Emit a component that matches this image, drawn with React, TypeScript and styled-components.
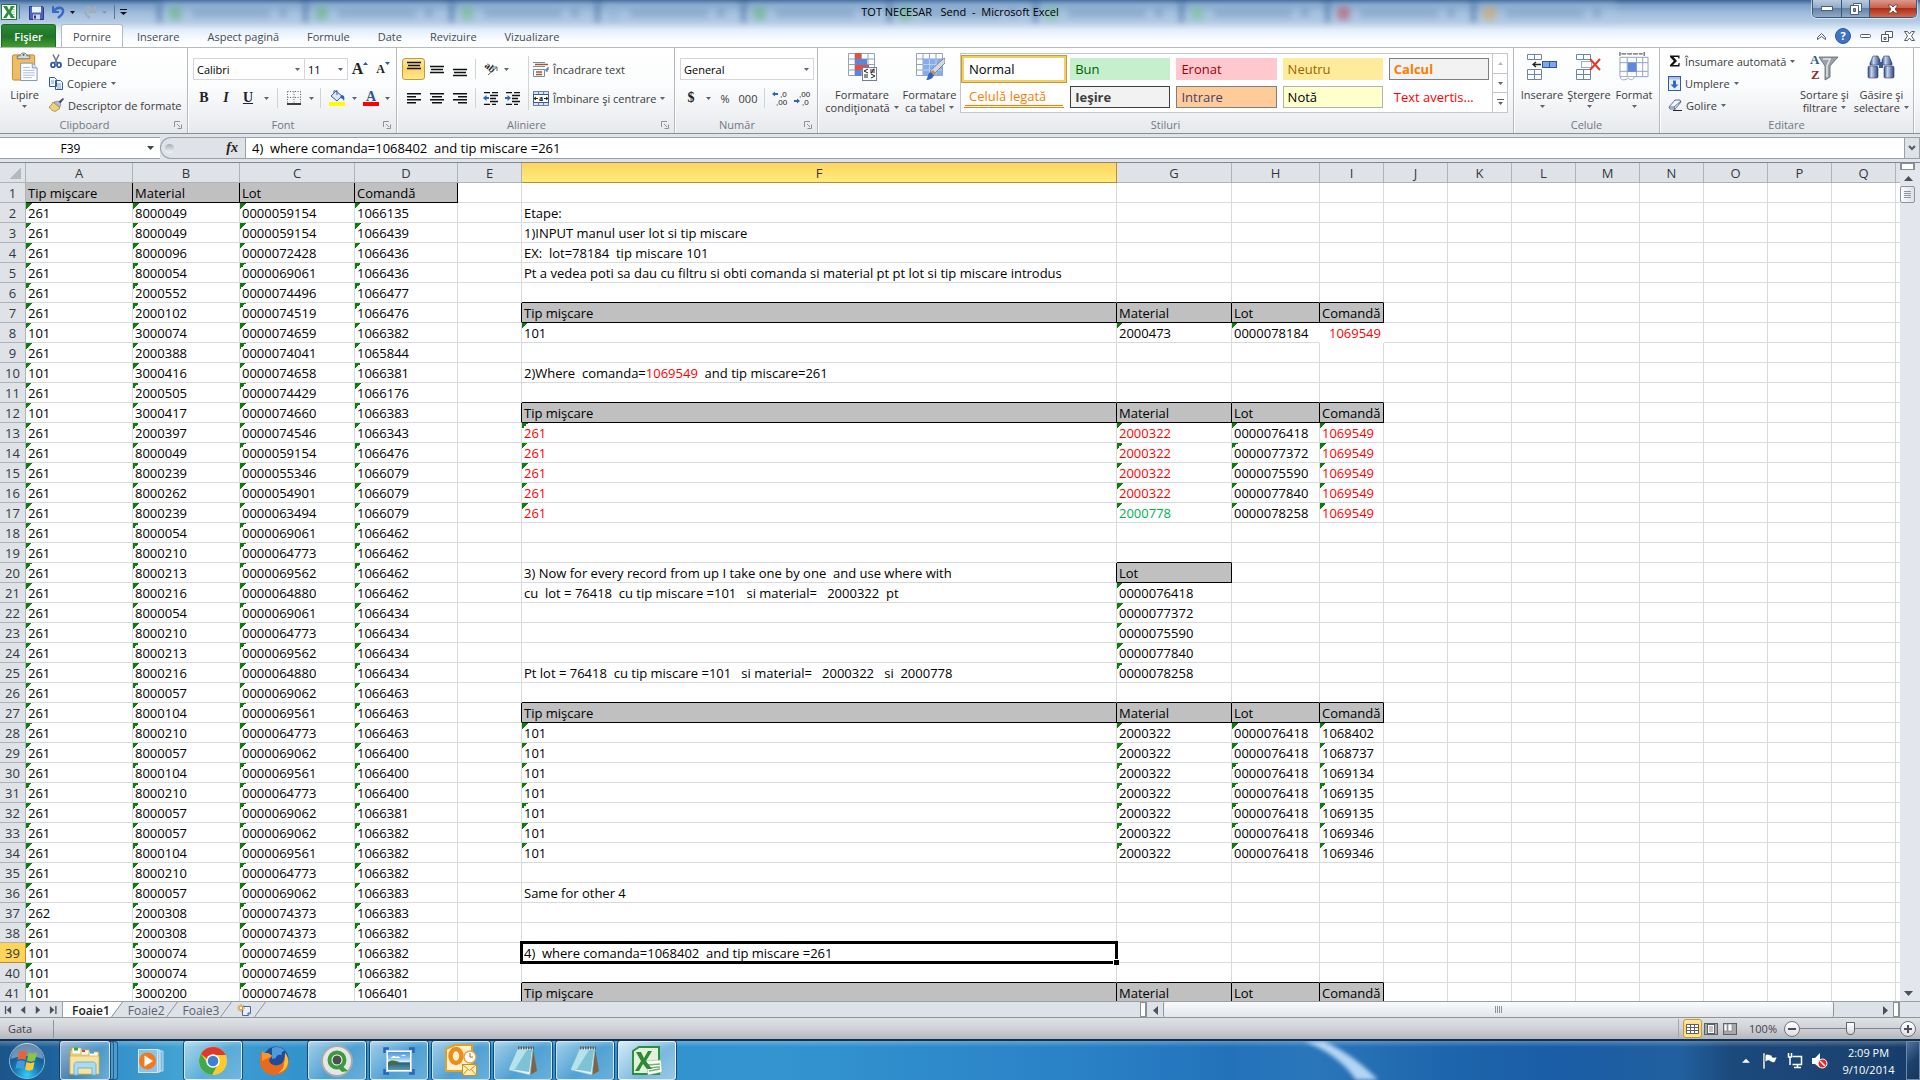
import React from "react";
import styled, { createGlobalStyle, css } from "styled-components";

const ui = `"Open Sans", "Noto Sans", sans-serif`;

const Global = createGlobalStyle`
  *, *::before, *::after { box-sizing: border-box; }
  body { margin: 0; background: #dfe3e8; font-family: ${ui}; font-size: 11px; color: #3b3b3b; }
  button, input, select { font: inherit; color: inherit; margin: 0; padding: 0; border: 0; background: none; border-radius: 0; outline: 0; }
  svg { display: block; flex: none; }
`;

const Window = styled.div`
  display: flex;
  flex-direction: column;
  height: 100vh;
  overflow: hidden;
`;

/* ---------- title bar ---------- */

const Glass = styled.header`
  position: relative;
  height: 48px;
  flex: none;
  overflow: hidden;
  border-bottom: 1px solid #b6babf;
  background: linear-gradient(#3c6596 0, #7ea2c9 5px, #a3bfdd 14px, #b4cce4 22px, #e3eefa 30px, #fafcff 40px, #ffffff 48px);
`;

const Backdrop = styled.div`
  position: absolute;
  inset: 0;
  display: flex;
  padding-left: 158px;
  filter: blur(3px);
`;

const GhostTab = styled.div`
  flex: 0 0 146px;
  height: 22px;
  display: flex;
  align-items: center;
  gap: 10px;
  padding: 4px 18px 0 8px;
  border-left: 3px solid #41699a;
  border-radius: 8px 8px 0 0;
  background: rgba(176, 202, 230, 0.25);
`;

const GhostIcon = styled.span<{ $c: string }>`
  width: 13px;
  height: 13px;
  border-radius: 4px;
  background: ${(p) => p.$c};
  opacity: 0.5;
`;

const GhostLine = styled.span`
  flex: 1;
  height: 7px;
  background: #587ba3;
  opacity: 0.35;
`;

const GhostClose = styled.span`
  width: 6px;
  height: 6px;
  background: #4a6c95;
  opacity: 0.5;
`;

const TitleRow = styled.div`
  position: relative;
  display: grid;
  grid-template-columns: 1fr auto 1fr;
  height: 24px;
`;

const Quick = styled.div`
  display: flex;
  align-items: center;
`;

const Slot = styled.button<{ $w?: number }>`
  width: ${(p) => p.$w ?? 22}px;
  height: 22px;
  flex: none;
  display: flex;
  align-items: center;
  justify-content: center;
`;

const QuickSep = styled.span`
  width: 1px;
  height: 14px;
  background: #5f7590;
`;

const Title = styled.h1`
  margin: 0;
  font-size: 11px;
  font-weight: 400;
  line-height: 24px;
  color: #000;
  white-space: pre;
`;

const Caption = styled.div`
  justify-self: end;
  display: flex;
  height: 18px;
  margin-right: 3px;
  border: 1px solid #3c5878;
  border-top: 0;
  border-radius: 0 0 5px 5px;
  overflow: hidden;
  box-shadow: 0 0 0 1px rgba(255, 255, 255, 0.5);
`;

const CapBtn = styled.button<{ $close?: boolean }>`
  width: ${(p) => (p.$close ? 47 : 28)}px;
  display: flex;
  align-items: center;
  justify-content: center;
  background: ${(p) =>
    p.$close
      ? "linear-gradient(#d99b8d, #c9614d 45%, #b02c17 50%, #cf6a50)"
      : "linear-gradient(#b9cbdf, #92abc7 45%, #6482a5 50%, #8facca)"};
  & + & { border-left: 1px solid #3c5878; }
`;

/* ---------- ribbon tabs ---------- */

const TabRow = styled.nav`
  position: relative;
  display: flex;
  height: 24px;
  padding-left: 1px;
`;

const FileTab = styled.button`
  width: 55px;
  margin-right: 5px;
  border: 1px solid #1d6b25;
  border-bottom: 0;
  border-radius: 3px 3px 0 0;
  background: linear-gradient(#2c8b34, #1f7528 50%, #42a32c);
  color: #fff;
  font-weight: 600;
`;

const Tab = styled.button<{ $active?: boolean }>`
  padding: 0 14px;
  color: #444a52;
  ${(p) =>
    p.$active &&
    css`
      padding: 0 11px;
      border: 1px solid #b6babf;
      border-bottom: 0;
      border-radius: 3px 3px 0 0;
      background: #fff;
    `}
`;

const DocControls = styled.div`
  display: flex;
  align-items: center;
  margin-left: auto;
`;

/* ---------- ribbon ---------- */

const Ribbon = styled.section`
  display: flex;
  height: 86px;
  flex: none;
  border-bottom: 1px solid #8a8f96;
  background: linear-gradient(#ffffff, #fbfcfd 45%, #eceef1 85%, #e6e9ec);
`;

const Group = styled.div<{ $w?: number }>`
  display: flex;
  flex-direction: column;
  flex: ${(p) => (p.$w ? `0 0 ${p.$w}px` : "1 1 0")};
  min-width: 0;
  border-right: 1px solid #b5b9be;
  box-shadow: 1px 0 0 #fff;
`;

const GroupBody = styled.div<{ $pad?: number }>`
  display: flex;
  height: 68px;
  padding: 2px 0 0 ${(p) => p.$pad ?? 0}px;
`;

const GroupLabel = styled.div`
  display: flex;
  align-items: center;
  height: 17px;
  color: #727784;
  span { flex: 1; text-align: center; }
`;

const LaunchBtn = styled.button`
  width: 18px;
  height: 16px;
  display: flex;
  align-items: center;
  justify-content: center;
`;

const Big = styled.button<{ $w: number }>`
  width: ${(p) => p.$w}px;
  flex: none;
  display: flex;
  flex-direction: column;
  align-items: center;
  padding-top: 2px;
  line-height: 13px;
  white-space: nowrap;
  & > svg { height: 30px; }
  & > svg + span { margin-top: 6px; }
`;

const BigLine = styled.span`
  display: flex;
  align-items: center;
  gap: 4px;
`;

const CaretBox = styled.span`
  display: flex;
  align-items: center;
  height: 11px;
`;

const Stack = styled.div<{ $rows?: boolean }>`
  display: flex;
  flex-direction: column;
  ${(p) => p.$rows && css`gap: 7px; padding-top: 8px;`}
`;

const Row = styled.div`
  display: flex;
  align-items: center;
  height: 22px;
`;

const Small = styled.button`
  display: flex;
  align-items: center;
  gap: 4px;
  height: 22px;
  white-space: nowrap;
`;

const Tool = styled(Slot)<{ $on?: boolean }>`
  ${(p) =>
    p.$on &&
    css`
      border: 1px solid #c29b3d;
      border-radius: 3px;
      background: linear-gradient(#fce7a2, #fdd468 50%, #fee88d);
    `}
`;

const Sep = styled.span<{ $h?: number }>`
  width: 1px;
  height: ${(p) => p.$h ?? 20}px;
  margin: 0 4px;
  flex: none;
  background: #d0d3d7;
`;

const TallSep = styled(Sep)`
  align-self: center;
`;

const Pick = styled.label<{ $w: number }>`
  display: flex;
  align-items: center;
  width: ${(p) => p.$w}px;
  height: 22px;
  padding-right: 4px;
  border: 1px solid #d3d6da;
  background: #fff;
  color: #000;
  & + & { border-left: 0; }
  select { flex: 1; min-width: 0; padding-left: 3px; appearance: none; height: 20px; }
`;

const Glyph = styled.span<{ $size?: number; $italic?: boolean; $line?: boolean }>`
  font-family: "Liberation Serif", serif;
  font-weight: 700;
  font-size: ${(p) => p.$size ?? 14}px;
  font-style: ${(p) => (p.$italic ? "italic" : "normal")};
  text-decoration: ${(p) => (p.$line ? "underline" : "none")};
  color: #222;
`;

const Gallery = styled.div`
  display: flex;
  flex: 1;
  height: 60px;
  margin: 3px 5px 0 0;
  border: 1px solid #c3c7cc;
  background: #fff;
`;

const Swatches = styled.div`
  display: grid;
  flex: 1;
  grid-template-columns: repeat(5, minmax(0, 1fr));
  grid-auto-rows: 22px;
  gap: 6px;
  padding: 4px 3px 0 3px;
`;

const Swatch = styled.button<{ $bg?: string; $fg: string; $edge?: string; $bold?: boolean; $sel?: boolean; $linked?: boolean }>`
  padding-left: 4px;
  text-align: left;
  font-size: 13px;
  line-height: 18px;
  white-space: nowrap;
  font-weight: ${(p) => (p.$bold ? 700 : 400)};
  background: ${(p) => p.$bg ?? "#fff"};
  color: ${(p) => p.$fg};
  border: 1px solid ${(p) => p.$edge ?? "transparent"};
  ${(p) => p.$sel && css`border-color: #fff; outline: 2px solid #f3cf60; box-shadow: 0 0 0 3px #c79a35;`}
  ${(p) => p.$linked && css`border-bottom: 3px double #ff8001;`}
`;

const GalleryNav = styled.div`
  display: flex;
  flex-direction: column;
  width: 15px;
  border-left: 1px solid #c3c7cc;
  button { flex: 1; display: flex; align-items: center; justify-content: center; }
  button + button { border-top: 1px solid #c3c7cc; }
`;

/* ---------- formula bar ---------- */

const FormulaBar = styled.div`
  display: flex;
  flex: none;
  height: 28px;
  padding: 3px 0;
  background: #dfe4ea;
`;

const NameBox = styled.div`
  display: flex;
  align-items: center;
  width: 160px;
  border: 1px solid #9ba0a7;
  border-width: 1px 0;
  background: #fff;
  color: #000;
  input { width: 141px; text-align: center; font-size: 12px; }
`;

const FxArea = styled.div`
  display: flex;
  align-items: center;
  justify-content: space-between;
  width: 85px;
  padding: 0 7px 0 4px;
  border: 1px solid #9ba0a7;
  border-right: 0;
  border-radius: 11px 0 0 11px;
  background: #dfe3e8;
`;

const Knob = styled.span`
  width: 9px;
  height: 9px;
  border-radius: 50%;
  background: linear-gradient(#a9adb3, #f4f5f6);
`;

const FormulaInput = styled.div`
  flex: 1;
  border: 1px solid #9ba0a7;
  border-right: 0;
  background: #fff;
  input { width: 100%; height: 20px; padding-left: 6px; font-size: 13px; color: #000; white-space: pre; }
`;

const Expand = styled.button`
  width: 16px;
  display: flex;
  align-items: center;
  justify-content: center;
  border: 1px solid #9ba0a7;
  background: #dfe3e8;
`;

/* ---------- worksheet ---------- */

const Work = styled.main`
  display: flex;
  flex: 1 1 0;
  min-height: 0;
  border-top: 1px solid #84888e;
  background: #fff;
`;

const Pane = styled.div`
  flex: 1;
  min-width: 0;
  overflow: hidden;
`;

const Sheet = styled.table`
  table-layout: fixed;
  width: max-content;
  border-collapse: separate;
  border-spacing: 0;
  font-size: 13px;
  line-height: 18px;
  color: #000;
`;

const head = css<{ $on?: boolean }>`
  height: 20px;
  padding: 0;
  font-weight: 400;
  color: #33373d;
  text-align: center;
  border: 0 solid #aeb3ba;
  border-width: 0 1px 1px 0;
  background: #dfe3e8;
`;

const ColHead = styled.th<{ $on?: boolean }>`
  ${head}
  ${(p) => p.$on && css`border-color: #c18b2c; background: linear-gradient(#ffd461, #ffec7b);`}
`;

const RowHead = styled.th<{ $on?: boolean }>`
  ${head}
  ${(p) => p.$on && css`border-color: #c18b2c; background: #ffd559;`}
`;

const Corner = styled.th`
  ${head}
  background: linear-gradient(135deg, transparent 50%, #b4b9bf 50%) 10px 5px / 11px 11px no-repeat, #dfe3e8;
`;

const Cell = styled.td<{ $fill?: boolean; $flag?: boolean; $r: string; $b: string; $c?: string; $end?: boolean }>`
  position: relative;
  height: 20px;
  padding: 0 2px;
  white-space: pre;
  text-align: ${(p) => (p.$end ? "right" : "left")};
  color: ${(p) => p.$c ?? "#000"};
  border: 0 solid;
  border-right: 1px solid ${(p) => p.$r};
  border-bottom: 1px solid ${(p) => p.$b};
  background: ${(p) =>
    p.$fill ? "#c0c0c0" : p.$flag ? "linear-gradient(135deg, #0a7d0a 50%, transparent 50%) 0 0 / 6px 6px no-repeat" : "none"};
`;

const Red = styled.span`
  color: #f00;
`;

const Selection = styled.span`
  position: absolute;
  inset: -2px;
  border: 3px solid #000;
  pointer-events: none;
  z-index: 1;
  &::after {
    content: "";
    position: absolute;
    right: -4px;
    bottom: -4px;
    width: 6px;
    height: 6px;
    background: #000;
    border: 1px solid #fff;
    border-width: 1px 0 0 1px;
  }
`;

const VScroll = styled.div`
  display: flex;
  flex-direction: column;
  width: 20px;
  flex: none;
  padding-right: 5px;
  background: #e3e7ed;
`;

const Splitter = styled.span`
  height: 7px;
  border: 2px solid #8b9097;
  border-width: 1px 2px;
  background: #fff;
`;

const ScrollBtn = styled.button`
  width: 16px;
  height: 16px;
  display: flex;
  flex: none;
  align-items: center;
  justify-content: center;
`;

const VThumb = styled.span`
  height: 17px;
  display: flex;
  align-items: center;
  justify-content: center;
  border: 1px solid #8f949b;
  border-radius: 2px;
  background: linear-gradient(90deg, #fbfcfd, #dde1e6);
`;

const VTrack = styled.div`
  flex: 1;
`;

/* ---------- sheet tabs ---------- */

const SheetBar = styled.div`
  display: flex;
  flex: none;
  height: 17px;
  padding-right: 20px;
  border-top: 1px solid #9ba0a7;
  border-bottom: 1px solid #8f949b;
  background: #dde1e8;
`;

const SheetNav = styled.div`
  display: flex;
  width: 63px;
  border-right: 1px solid #9ba0a7;
  button { width: 15px; display: flex; align-items: center; justify-content: center; }
`;

const SheetTab = styled.button<{ $active?: boolean }>`
  padding: 2px 0 0 ${(p) => (p.$active ? 9 : 5)}px;
  font-size: 12px;
  line-height: 14px;
  color: ${(p) => (p.$active ? "#222" : "#5b6068")};
  font-weight: ${(p) => (p.$active ? 600 : 400)};
  background: ${(p) => (p.$active ? "#fff" : "none")};
`;

const HScroll = styled.div`
  display: flex;
  width: 40%;
  margin-left: auto;
`;

const HSplit = styled.span`
  width: 7px;
  border: 1px solid #8b9097;
  border-right-width: 2px;
  background: #fff;
`;

const HTrack = styled.div`
  display: flex;
  flex: 1;
  padding-right: 43px;
`;

const HThumb = styled.span`
  flex: 1;
  display: flex;
  align-items: center;
  justify-content: center;
  border: 1px solid #8f949b;
  border-width: 0 1px;
  border-radius: 2px;
  background: linear-gradient(#f9fafc, #e2e6eb);
`;

/* ---------- status bar ---------- */

const Status = styled.footer`
  display: flex;
  align-items: center;
  flex: none;
  height: 21px;
  background: linear-gradient(#dfe2e5, #cfd2d6 50%, #b4b8bd);
  color: #3f444b;
`;

const Ready = styled.span`
  width: 54px;
  padding-left: 8px;
  line-height: 18px;
  border-right: 1px solid #8f949b;
`;

const Views = styled.div`
  display: flex;
  align-items: center;
  margin-left: auto;
  padding-left: 4px;
  border-left: 1px solid #a3a7ac;
`;

const ViewBtn = styled(Tool)`
  height: 19px;
`;

const ZoomLabel = styled.button`
  width: 37px;
  text-align: right;
  margin-right: 7px;
`;

const Zoom = styled.input`
  width: 100px;
  height: 16px;
  appearance: none;
  &::-webkit-slider-runnable-track { height: 1px; background: #7d838b; }
  &::-webkit-slider-thumb {
    appearance: none;
    width: 9px;
    height: 13px;
    margin-top: -6px;
    background: linear-gradient(#fff, #d5d8dc);
    border: 1px solid #5f656d;
    border-radius: 1px 1px 5px 5px;
  }
`;

const Round = styled.button`
  width: 16px;
  height: 16px;
  display: flex;
  align-items: center;
  justify-content: center;
  border: 1px solid #6f757d;
  border-radius: 50%;
  background: linear-gradient(#fff, #dcdfe2);
`;

/* ---------- taskbar ---------- */

const Taskbar = styled.div`
  position: relative;
  display: flex;
  flex: none;
  height: 41px;
  border-top: 2px solid #12314f;
  background:
    linear-gradient(rgba(255, 255, 255, 0.25), rgba(255, 255, 255, 0) 6px),
    linear-gradient(90deg, #1b5489 0, #1f659e 60px, #338fc9 110px, #43a3d3 180px, #2f90cc 330px, #3394d0 780px, #2a81c6 1080px, #2272ba 1230px, #2b76bb 1310px, #1c64ab 1460px, #1a5da6 1560px, #21609f 1680px, #1c4a7d 1730px, #1a4270 1860px, #153b6b 100%);
`;

const Glare = styled.svg`
  position: absolute;
  left: 1280px;
  top: 0;
`;

const Start = styled.button`
  width: 60px;
  display: flex;
  justify-content: center;
  padding-right: 6px;
  align-items: center;
`;

const Apps = styled.div`
  display: flex;
  gap: 4px;
`;

const TaskBtn = styled.button<{ $state?: "open" | "active" | "stack" }>`
  width: 58px;
  display: flex;
  align-items: center;
  justify-content: center;
  border-radius: 3px;
  ${(p) =>
    p.$state &&
    css`
      border: 1px solid rgba(255, 255, 255, 0.65);
      box-shadow: 0 0 0 1px rgba(12, 50, 85, 0.75);
      background: ${p.$state === "active"
        ? "linear-gradient(135deg, rgba(255,255,255,.8), rgba(255,255,255,.35) 60%, rgba(255,255,255,.5))"
        : "linear-gradient(135deg, rgba(255,255,255,.55), rgba(255,255,255,.15) 55%, rgba(255,255,255,.28))"};
    `}
  ${(p) =>
    p.$state === "stack" &&
    css`
      width: 50px;
      margin-right: 8px;
      box-shadow: 0 0 0 1px rgba(12, 50, 85, 0.75), 4px 0 0 -1px #4d9cc9, 4px 0 0 0 #1f5f8d, 8px 0 0 -1px #4d9cc9, 8px 0 0 0 #1f5f8d;
    `}
`;

const Tray = styled.div`
  position: relative;
  display: flex;
  align-items: center;
  margin-left: auto;
  color: #fff;
`;

const Clock = styled.time`
  width: 75px;
  text-align: center;
  font-size: 11px;
  line-height: 17px;
`;

const ShowDesktop = styled.button`
  width: 14px;
  height: 39px;
  border: 1px solid #6d8cab;
  background: linear-gradient(135deg, #51749a, #1d426d 50%, #16365e);
`;

/* ---------- small drawings ---------- */

const Caret = ({ c = "#5f646c", up }: { c?: string; up?: boolean }) => (
  <svg width="5" height="3" viewBox="0 0 5 3"><path d={up ? "M0 3h5L2.500 0z" : "M0 0h5L2.500 3z"} fill={c} /></svg>
);
const Tri = ({ d, s = 9, c = "#4c5158" }: { d: string; s?: number; c?: string }) => (
  <svg width={s} height={s} viewBox="0 0 9 9"><path d={d} fill={c} /></svg>
);
const Launcher = () => (
  <svg width="8" height="8" viewBox="0 0 8 8" fill="none" stroke="#8d929a"><path d="M.5 6V.5H6" /><path d="M3 3l3 3M7.500 3.500v4h-4" /></svg>
);
const ExcelMark = () => (
  <svg width="16" height="16" viewBox="0 0 16 16"><rect x=".5" y=".5" width="15" height="15" fill="#fff" stroke="#1e7a34" /><path d="M9 3h5M9 5.500h5M9 8h5M9 10.500h5M9 13h5" stroke="#9ccb9f" /><path d="M2 2h4l2 4 2-4h3.500L9.800 8l4 6H10L7.800 10 5.500 14H2l4-6z" fill="#2b8e3d" /></svg>
);
const Save = () => (
  <svg width="15" height="15" viewBox="0 0 15 15"><path d="M.5 1.500h13l1 1v12H.5z" fill="#5062c0" stroke="#2b3786" /><rect x="3" y="1.500" width="9" height="6" fill="#eef3fb" /><rect x="4" y="9.500" width="7" height="5" fill="#cfd6e6" /><rect x="5" y="10.500" width="2" height="3" fill="#28337a" /></svg>
);
const Undo = ({ c, flip }: { c: string; flip?: boolean }) => (
  <svg width="14" height="14" viewBox="0 0 14 14"><g transform={flip ? "matrix(-1 0 0 1 14 0)" : undefined}><path d="M2 1v6h6" fill="none" stroke={c} strokeWidth="2" /><path d="M3 6C6 1 13 2 12 7c-.5 3-2.500 4-5 6" fill="none" stroke={c} strokeWidth="2.400" /></g></svg>
);
const Clipboard = () => (
  <svg width="28" height="31" viewBox="0 0 28 31"><rect x="1" y="3" width="23" height="26" rx="1.500" fill="#f0bd62" stroke="#b98a36" /><path d="M6 7V4h3c0-4 7-4 7 0h3v3z" fill="#d6d9de" stroke="#6f757e" /><circle cx="12.500" cy="3" r="1" fill="#555" /><path d="M9.500 11.500h12l5 5v13h-17z" fill="#fdfeff" stroke="#7d94b8" /><path d="M21.500 11.500v5h5" fill="#dbe6f5" stroke="#7d94b8" /><path d="M12 16h7M12 19h12M12 21.500h12M12 24h12M12 26.500h9" stroke="#a9bddb" /></svg>
);
const Scissors = () => (
  <svg width="14" height="14" viewBox="0 0 14 14" fill="none"><path d="M4 .5l4.500 9M10 .5l-4.500 9" stroke="#6b7789" strokeWidth="1.500" /><ellipse cx="4" cy="11" rx="2" ry="2.300" stroke="#2e5aa6" strokeWidth="1.800" /><ellipse cx="10" cy="11" rx="2" ry="2.300" stroke="#2e5aa6" strokeWidth="1.800" /></svg>
);
const Copy = () => (
  <svg width="14" height="13" viewBox="0 0 14 13" fill="#f4f8fe" stroke="#34599c"><path d="M.5.500h5l2 2v7h-7zM6.500 3.500h5l2 2v7h-7z" /><path d="M2 4h3M2 6h3M8 7h4M8 9h4M8 11h4" stroke="#7f9fd0" /></svg>
);
const Brush = () => (
  <svg width="15" height="14" viewBox="0 0 15 14"><path d="M14 0l-5 4 2 2 4-5z" fill="#4c4577" /><path d="M5 4l4-1 3 3-1 3z" fill="#b7bdc8" stroke="#777d88" strokeWidth=".6" /><path d="M0 9c2-1 3-3 4-5l7 6-4 3c-2 1-5-1-7-4z" fill="#f1d377" stroke="#8c6f2c" strokeWidth=".7" /></svg>
);
const Lines = ({ w }: { w: [number, number][] }) => (
  <svg width="14" height="11" viewBox="0 0 14 11">
    {w.map(([x, n], i) => <rect key={i} x={x} y={i * 3} width={n} height="1.500" fill="#111" />)}
  </svg>
);
const VLines = ({ y }: { y: number }) => (
  <svg width="14" height="18" viewBox="0 0 14 18"><path d={`M0 ${y}.500h14M1 ${y + 3}.500h12M0 ${y + 6}.500h14`} stroke="#111" strokeWidth="1.300" /></svg>
);
const Dots = () => (
  <svg width="14" height="14" viewBox="0 0 14 14"><path d="M.5.500h13M.5 6.500h13M.5.500v12M7 .5v12M13.500.500v12" stroke="#666" strokeDasharray="1 1.500" /><path d="M0 13h14" stroke="#000" strokeWidth="1.500" /></svg>
);
const Bucket = () => (
  <svg width="16" height="16" viewBox="0 0 16 16"><path d="M2 6l5-5 6 5-5 5z" fill="#dbe6f6" stroke="#3f5f93" /><path d="M5 3V1c0-1.500 3-1.500 3 0v4" fill="none" stroke="#3f5f93" /><path d="M12 5c3 0 4 2 3 6-1-2-2-3-4-3z" fill="#2c5fb4" /><rect y="12" width="16" height="4" fill="#ff0" /></svg>
);
const FontColor = () => (
  <svg width="16" height="16" viewBox="0 0 16 16"><text x="8" y="11" textAnchor="middle" fontFamily="Liberation Serif, serif" fontWeight="700" fontSize="14" fill="#33549a">A</text><rect y="12" width="16" height="4" fill="#f00" /></svg>
);
const Orient = () => (
  <svg width="16" height="16" viewBox="0 0 16 16"><text x="0" y="8" transform="rotate(40 4 8)" fontFamily="Liberation Serif, serif" fontWeight="700" fontSize="10" fill="#222">ab</text><path d="M5 14l9-8M10 6h4v4" fill="none" stroke="#666" /></svg>
);
const Indent = ({ out }: { out?: boolean }) => (
  <svg width="16" height="13" viewBox="0 0 16 13"><path d="M1 .5h6M9 .5h6M7 3.500h8M7 6.500h6M7 9.500h8M1 12.500h6M9 12.500h4" stroke="#111" strokeWidth="1.300" /><path d={out ? "M0 6l3.500-3v2H6v2H3.500v2z" : "M6 6L2.500 3v2H0v2h2.500v2z"} fill="#2f63c0" /></svg>
);
const Wrap = () => (
  <svg width="16" height="15" viewBox="0 0 16 15"><path d="M0 .5h12M0 4.500h12M.5 7.500h11v7H.5z" stroke="#7b8ba5" fill="#fff" /><path d="M2 2.500h13M3 10h6M3 12.500h6" stroke="#a5562c" strokeWidth="1.400" /><path d="M15 5v3h-2M14.500 6l-2 2 2 2" stroke="#34599c" fill="none" /></svg>
);
const Merge = () => (
  <svg width="16" height="15" viewBox="0 0 16 15"><rect x=".5" y=".5" width="15" height="14" fill="#d8e3f3" stroke="#6a80a5" /><path d="M5.500 0v4M10.500 0v4M5.500 11v4M10.500 11v4" stroke="#6a80a5" /><rect x=".5" y="3.500" width="15" height="8" fill="#fff" stroke="#34599c" /><path d="M1 7.500h4M11 7.500h4M3 6l-2 1.500L3 9M13 6l2 1.500L13 9" stroke="#222" fill="none" /><text x="8" y="10" textAnchor="middle" fontSize="8" fontWeight="700" fontFamily="Liberation Serif, serif">a</text></svg>
);
const Decimal = ({ more }: { more?: boolean }) => (
  <svg width="17" height="16" viewBox="0 0 17 16"><path d={more ? "M0 4l3-2.500V3h3v2H3v1.500z" : "M6 11L3 8.500V10H0v2h3v1.500z"} fill="#2f63c0" /><g fontFamily="Liberation Sans, sans-serif" fontSize="8" fill="#222"><text x={more ? 8 : 5} y="7">{more ? ",0" : ",00"}</text><text x={more ? 4 : 8} y="15">{more ? ",00" : ",0"}</text></g></svg>
);
const gridPath = "M1.500 1.500h26v22h-26zM1.500 7h26M1.500 12.500h26M1.500 18h26M8 1.500v22M14.500 1.500v22M21 1.500v22";
const CondFmt = () => (
  <svg width="30" height="30" viewBox="0 0 30 30"><path d={gridPath} fill="#fff" stroke="#8fa3c4" /><rect x="8" y="1" width="6" height="6" fill="#e8503c" /><rect x="8" y="7" width="12" height="6" fill="#5b87d8" /><rect x="8" y="13" width="14" height="5" fill="#e8503c" /><rect x="8" y="18" width="6" height="6" fill="#5b87d8" /><rect x="15.500" y="15.500" width="14" height="13" fill="#fff" stroke="#70809b" /><path d="M21 17l-4 2 4 2M17 23h4M17 25h4M23 18h5M23 20h5M27 16.500l-3 5M24 22l4 2-4 2" stroke="#222" fill="none" /></svg>
);
const TableFmt = () => (
  <svg width="30" height="30" viewBox="0 0 30 30"><path d={gridPath} fill="#fff" stroke="#8fa3c4" /><path d="M8 7h19.500v16.500H8z" fill="#86acee" /><path d="M8 12.500h19M8 18h19M14.500 7v16M21 7v16" stroke="#b9d0f6" /><path d="M30 6v5L19 22l-4-3L28 7z" fill="#d5d8dc" stroke="#6e737a" strokeWidth=".8" /><path d="M11 28c2-1 1-7 5-8l3 3c-1 4-5 5-8 5z" fill="#3466b9" /><path d="M16 20l2-2 3 3-2 2z" fill="#c2924c" /></svg>
);
const InsertCells = () => (
  <svg width="30" height="30" viewBox="0 0 30 30"><path d="M.5 2.500h14v5H.5zM7.500 2.500v5M.5 17.500h14v10H.5zM.5 22.500h14M7.500 17.500v10" fill="#fff" stroke="#6d83ab" /><rect x="15.500" y="9.500" width="14" height="6" fill="#7fa6ec" stroke="#2f56a3" /><path d="M22.500 9.500v6" stroke="#2f56a3" /><path d="M6 12.500h8M9 10l-3 2.500L9 15" stroke="#222" fill="none" strokeWidth="1.300" /></svg>
);
const DeleteCells = () => (
  <svg width="26" height="30" viewBox="0 0 26 30"><path d="M.5 2.500h14v5H.5zM7.500 2.500v5M.5 17.500h14v10H.5zM.5 22.500h14M7.500 17.500v10" fill="#fff" stroke="#6d83ab" /><path d="M5.500 9.500h10v6h-10z" fill="none" stroke="#2f56a3" strokeDasharray="1 1" /><path d="M14 7l10 11M24 7L14 18" stroke="#e23a24" strokeWidth="2" /></svg>
);
const FormatCells = () => (
  <svg width="32" height="31" viewBox="0 0 32 31"><path d="M1.500 0v4M26.500 0v4M3 2h22" stroke="#333" strokeDasharray="5 1" /><path d="M1.500 5.500h29v20h-29zM1.500 11h29M1.500 20h29M9 5.500v20M18.500 5.500v20M25 5.500v20" fill="#fff" stroke="#8fa3c4" /><rect x="9.500" y="11" width="9" height="9.500" fill="#5f8ae0" /><path d="M2 26c0 4 6 3 8 1 3 3 6 1 6-1" fill="#fff" stroke="#8fa3c4" /></svg>
);
const Sigma = () => (
  <svg width="13" height="12" viewBox="-1 0 13 12"><path d="M1 .5h9.500v3h-1L9 2H4.500L8 6l-4 4h5l.7-2h1L10.500 11.500H1V10l3.800-4L1 2z" fill="#111" /></svg>
);
const Fill = () => (
  <svg width="13" height="15" viewBox="0 0 13 15"><rect x=".5" y=".5" width="12" height="14" fill="#e8f0fb" stroke="#34599c" /><rect x="1" y="1" width="11" height="2.500" fill="#a9c2e8" /><path d="M5 4.500h3v4h2.500l-4 4-4-4H5z" fill="#3168cc" /></svg>
);
const Eraser = () => (
  <svg width="14" height="12" viewBox="0 0 14 12"><path d="M1 8l6-7h5l1 2-6 7H2z" fill="#f2f5fa" stroke="#5b6f94" /><path d="M1 8h5l7-6M6 8l1 3" fill="none" stroke="#5b6f94" /><path d="M5 11.500h9" stroke="#222" /></svg>
);
const Sort = () => (
  <svg width="30" height="30" viewBox="0 0 30 30"><path d="M10 5h19l-8 9v11l-5 3V14z" fill="#9aa0a8" stroke="#5d636b" strokeWidth=".8" /><path d="M14 7h7l-3 7v11" fill="none" stroke="#e3e6e9" strokeWidth="1.500" /><g fontFamily="Liberation Serif, serif" fontWeight="700" fontSize="13"><text x="1" y="12" fill="#33549a">A</text><text x="2" y="27" fill="#9a2b2b">Z</text></g></svg>
);
const Binoculars = () => (
  <svg width="28" height="28" viewBox="0 0 28 28"><defs><linearGradient id="bino"><stop offset="0" stopColor="#2f4d86" /><stop offset=".35" stopColor="#c3d4f0" /><stop offset="1" stopColor="#2c4376" /></linearGradient></defs><path d="M6 3h5l2 4v5H3v-2z" fill="url(#bino)" stroke="#2b416f" strokeWidth=".6" /><path d="M17 3h5l3 7v2H15V7z" fill="url(#bino)" stroke="#2b416f" strokeWidth=".6" /><path d="M12 9h4v6h-4z" fill="#40598f" /><rect x="1" y="13" width="10" height="12" rx="1.500" fill="url(#bino)" stroke="#2b416f" strokeWidth=".6" /><rect x="17" y="13" width="10" height="12" rx="1.500" fill="url(#bino)" stroke="#2b416f" strokeWidth=".6" /></svg>
);
const Slash = ({ active }: { active?: boolean }) => (
  <svg width="13" height="15" viewBox="0 0 13 15">{active && <path d="M0 0h12L1 15H0z" fill="#fff" />}<path d="M12.500 0L1.500 15" stroke="#8f949b" fill="none" /></svg>
);
const NewSheet = () => (
  <svg width="16" height="13" viewBox="0 0 16 13"><path d="M5.500 2.500h8v7l-2 2h-6z" fill="#eaf0fa" stroke="#4868a3" /><path d="M11 12v-3h3" fill="#b7c9e8" stroke="#4868a3" /><path d="M4 0v8M0 4h8M1.300 1.300l5.400 5.400M6.700 1.300L1.300 6.700" stroke="#e69a2b" strokeWidth="1.200" /><circle cx="4" cy="4" r="1.200" fill="#fff" /></svg>
);

/* ---------- taskbar drawings ---------- */

const StartOrb = () => (
  <svg width="38" height="38" viewBox="0 0 38 38"><defs><radialGradient id="orb" cx=".5" cy=".9" r=".9"><stop offset="0" stopColor="#2fd0fb" /><stop offset=".4" stopColor="#1878b4" /><stop offset="1" stopColor="#123f70" /></radialGradient></defs><circle cx="19" cy="19" r="17.500" fill="url(#orb)" stroke="#8fb9d9" /><path d="M3 17a16 16 0 0 1 32 0c-9-4-22-4-32 0z" fill="#fff" opacity=".38" /><path d="M11 10c3-1.500 5-1.500 8 0l-1.500 8c-3-1.500-5-1.500-8 0z" fill="#ee6230" /><path d="M20.500 10.500c3 1.500 5 1.500 8.500 0l-2 8c-3 1.500-5 1.500-8 0z" fill="#8cc63f" /><path d="M9 19.500c3-1.500 5-1.500 8 0L15.500 27c-3-1.500-5-1.500-8 0z" fill="#3f9be0" /><path d="M18.500 20c3 1.500 5 1.500 8 0l-1.500 7.500c-3 1.500-5 1.500-8 0z" fill="#fcc838" /></svg>
);
const Explorer = () => (
  <svg width="34" height="30" viewBox="0 0 34 30"><path d="M2 28V4h10l2 2h17v22z" fill="#efd27e" stroke="#b99642" /><path d="M4 2h9v6H4zM13 4h8v5h-8zM21 6h9v5h-9z" fill="#fffdf2" stroke="#d5b766" strokeWidth=".7" /><path d="M6 1.500h4v3H6z" fill="#2fa53a" /><path d="M14 4h3v2h-3z" fill="#d9432f" /><path d="M22 5.500h4v2h-4z" fill="#3c9be0" /><path d="M2 10h29v18H2z" fill="#f8e3a0" stroke="#cfae5a" strokeWidth=".7" /><path d="M6 29V19c0-2 1-3 3-3h16c2 0 3 1 3 3v10h-4v-7H10v7z" fill="#a6dcf3" stroke="#67b4d8" opacity=".95" /></svg>
);
const Player = () => (
  <svg width="28" height="26" viewBox="0 0 28 26"><path d="M20 3h6v20h-6z" fill="#7fb8de" stroke="#bcdcf0" /><path d="M17 2h6v22h-6z" fill="#9ccbe9" stroke="#d3e9f6" /><rect x="1.500" y="1.500" width="19" height="23" fill="#8cc3e6" stroke="#cfe7f6" /><circle cx="10.500" cy="13" r="8.500" fill="#f27a1c" /><path d="M7.500 7.500v11l8.500-5.500z" fill="#fff" /></svg>
);
const Chrome = () => (
  <svg width="30" height="30" viewBox="0 0 30 30"><circle cx="15" cy="15" r="14" fill="#fbcb2e" /><path d="M2.900 8A14 14 0 0 1 27.600 9H15a6 6 0 0 0-5.700 4z" fill="#e0382b" /><path d="M2.900 8A14 14 0 0 0 14 29l5.500-10a6 6 0 0 1-10-2z" fill="#3faa4b" /><circle cx="15" cy="15" r="6.800" fill="#fff" /><circle cx="15" cy="15" r="5.300" fill="#3f7fd2" /></svg>
);
const Firefox = () => (
  <svg width="32" height="31" viewBox="0 0 32 31"><circle cx="17" cy="14" r="12.500" fill="#1f4d9c" /><path d="M13 3c4-2 10-1 13 3-3 0-4 2-3 4-4-1-6 1-6 3l-4 1z" fill="#4f9ad8" /><path d="M3 6c1 2 3 2 5 2 2 0 4 2 5 3l-3 4c1 5 7 7 12 4 3-2 4-6 4-11 7 7 4 21-9 22C7 31 0 23 1 14c0-3 1-6 2-8z" fill="#ea6a1d" /><path d="M26 8c6 7 3 18-7 20 5-3 6-6 6-10 1-3 1-7 1-10z" fill="#fbc22f" /><path d="M3 6c1 2 3 2 5 2 2 0 4 2 5 3l-4 2-6 3z" fill="#f6962c" /></svg>
);
const Qlik = () => (
  <svg width="34" height="34" viewBox="0 0 34 34"><circle cx="17" cy="17" r="15" fill="#e4e7e6" stroke="#a6abab" strokeWidth="2" /><circle cx="17" cy="16" r="7.500" fill="#fff" stroke="#3c9a3d" strokeWidth="4" /><circle cx="17" cy="16" r="4.500" fill="#465150" /><path d="M20 20l8 7-6 1-5-5z" fill="#3c9a3d" /></svg>
);
const Photo = () => (
  <svg width="32" height="28" viewBox="0 0 32 28"><defs><linearGradient id="sky" x2="0" y2="1"><stop offset="0" stopColor="#4a97e6" /><stop offset=".35" stopColor="#8cc4f0" /><stop offset=".55" stopColor="#e4f2fa" /><stop offset=".6" stopColor="#2b5f74" /><stop offset="1" stopColor="#5d9ab0" /></linearGradient></defs><rect x="3.500" y="3.500" width="25" height="21" fill="#fff" stroke="#c9d4e0" /><rect x="5" y="5" width="22" height="18" fill="url(#sky)" /><path d="M8 11c2-3 4-2 5-1 2-2 4 0 4 1zM18 9c2-2 4-1 5 0z" fill="#fff" /><path d="M5 15c5-3 7-1 12 0l-12 4z" fill="#3f6f43" /><path d="M1.500 6V1.500H6M26 1.500h4.500V6M1.500 22v4.500H6M26 26.500h4.500V22" fill="none" stroke="#2565b8" strokeWidth="2.500" /></svg>
);
const Outlook = () => (
  <svg width="34" height="34" viewBox="0 0 34 34"><path d="M2 5l9-4h17v26H2z" fill="#fff3cf" stroke="#e5a11d" strokeWidth="2" /><ellipse cx="12" cy="12" rx="5.500" ry="7" fill="none" stroke="#ef8a1d" strokeWidth="4.500" /><circle cx="26" cy="13" r="6" fill="#fff" stroke="#e9a13a" strokeWidth="1.500" /><path d="M26 9v4h3" fill="none" stroke="#b06a10" /><rect x="18.500" y="20.500" width="14" height="11" fill="#fdeeb4" stroke="#c98f24" /><path d="M18.500 20.500l7 6 7-6M18.500 31.500l5-6M32.500 31.500l-5-6" fill="none" stroke="#c98f24" /></svg>
);
const Notepad = () => (
  <svg width="34" height="32" viewBox="0 0 34 32"><path d="M27 3l4 23-7 4z" fill="#7e6547" /><path d="M12 3h15l-3 27-21-5z" fill="#dff2f7" stroke="#8fb3bf" strokeWidth=".6" /><path d="M12 5h14l-3 22-19-3z" fill="#7cc3d6" /><path d="M12 5h9L9 24H3z" fill="#b5e2ed" /><path d="M12 3h16" stroke="#555d63" strokeWidth="3" strokeDasharray="1.500 1" /></svg>
);
const ExcelApp = () => (
  <svg width="32" height="30" viewBox="0 0 32 30"><path d="M2 5l6-4h20v27H2z" fill="#e3f1dc" stroke="#2f8e3c" strokeWidth="2" /><path d="M15 15l15-1 1 12-14 3z" fill="#fff" stroke="#8cbf8c" strokeWidth=".6" /><path d="M17 19l12-1M17 22l12-1M18 25l11-2" stroke="#6fb471" strokeWidth="1.500" /><path d="M5 6h5l3 6 4-7h4l-6 10 6 8h-5l-4-5-4 7H4l6-10z" fill="#2b8a35" /></svg>
);

/* ---------- data ---------- */

const columns: [string, number][] = [
  ["A", 107], ["B", 107], ["C", 115], ["D", 103], ["E", 64], ["F", 595], ["G", 115], ["H", 88],
  ["I", 64], ["J", 64], ["K", 64], ["L", 64], ["M", 64], ["N", 64], ["O", 64], ["P", 64], ["Q", 64], ["", 64],
];

const stock = `261 8000049 0000059154 1066135
261 8000049 0000059154 1066439
261 8000096 0000072428 1066436
261 8000054 0000069061 1066436
261 2000552 0000074496 1066477
261 2000102 0000074519 1066476
101 3000074 0000074659 1066382
261 2000388 0000074041 1065844
101 3000416 0000074658 1066381
261 2000505 0000074429 1066176
101 3000417 0000074660 1066383
261 2000397 0000074546 1066343
261 8000049 0000059154 1066476
261 8000239 0000055346 1066079
261 8000262 0000054901 1066079
261 8000239 0000063494 1066079
261 8000054 0000069061 1066462
261 8000210 0000064773 1066462
261 8000213 0000069562 1066462
261 8000216 0000064880 1066462
261 8000054 0000069061 1066434
261 8000210 0000064773 1066434
261 8000213 0000069562 1066434
261 8000216 0000064880 1066434
261 8000057 0000069062 1066463
261 8000104 0000069561 1066463
261 8000210 0000064773 1066463
261 8000057 0000069062 1066400
261 8000104 0000069561 1066400
261 8000210 0000064773 1066400
261 8000057 0000069062 1066381
261 8000057 0000069062 1066382
261 8000104 0000069561 1066382
261 8000210 0000064773 1066382
261 8000057 0000069062 1066383
262 2000308 0000074373 1066383
261 2000308 0000074373 1066382
101 3000074 0000074659 1066382
101 3000074 0000074659 1066382
101 3000200 0000074678 1066401`.split("\n").map((l) => l.split(" "));

type Entry = { v: React.ReactNode; fill?: boolean; flag?: boolean; c?: string; end?: boolean };
const cells: Record<string, Entry> = {};
const headings = ["Tip mişcare", "Material", "Lot", "Comandă"];
const put = (letters: string, row: number, values: string[], extra: Partial<Entry> = {}, colors: string[] = []) =>
  values.forEach((v, i) => { cells[letters[i] + row] = { v, c: colors[i] || undefined, ...extra }; });

put("ABCD", 1, headings, { fill: true });
stock.forEach((r, i) => put("ABCD", i + 2, r, { flag: true }));
[7, 12, 27, 41].forEach((r) => put("FGHI", r, headings, { fill: true }));
put("F", 2, ["Etape:"]);
put("F", 3, ["1)INPUT manul user lot si tip miscare"]);
put("F", 4, ["EX:  lot=78184  tip miscare 101"]);
put("F", 5, ["Pt a vedea poti sa dau cu filtru si obti comanda si material pt pt lot si tip miscare introdus"]);
put("FGH", 8, ["101", "2000473", "0000078184"], { flag: true });
cells.I8 = { v: "1069549", c: "#f00", end: true };
cells.F10 = { v: <>2)Where  comanda=<Red>1069549</Red>  and tip miscare=261</> };
const lots = ["0000076418", "0000077372", "0000075590", "0000077840", "0000078258"];
lots.forEach((lot, i) => {
  const last = i === 4;
  put("FGHI", 13 + i, ["261", last ? "2000778" : "2000322", lot, "1069549"], { flag: true }, ["#f00", last ? "#00b050" : "#f00", "", "#f00"]);
  put("G", 21 + i, [lot], { flag: true });
});
put("F", 20, ["3) Now for every record from up I take one by one  and use where with"]);
put("G", 20, ["Lot"], { fill: true });
put("F", 21, ["cu  lot = 76418  cu tip miscare =101   si material=   2000322  pt"]);
put("F", 25, ["Pt lot = 76418  cu tip miscare =101   si material=   2000322   si  2000778"]);
["1068402", "1068737", "1069134", "1069135", "1069135", "1069346", "1069346"].forEach((c, i) =>
  put("FGHI", 28 + i, ["101", "2000322", "0000076418", c], { flag: true }));
put("F", 36, ["Same for other 4"]);
const formula = "4)  where comanda=1068402  and tip miscare =261";
put("F", 39, [formula]);

const rows = Array.from({ length: 41 }, (_, i) => i + 1);

const edge = (a?: Entry, b?: Entry) => (a?.fill || b?.fill ? "#000" : a?.end || b?.end ? "#fff" : "#d9dadc");

const ghosts = ["#59b36b", "#59b36b", "#6db97d", "#8fb2d8", "#59b36b", "#59b36b", "#6fc47f", "#6fc47f", "#c93a4a", "#e8a23c"];

const swatches = [
  { t: "Normal", fg: "#000", sel: true },
  { t: "Bun", fg: "#006100", bg: "#c6efce" },
  { t: "Eronat", fg: "#9c0006", bg: "#ffc7ce" },
  { t: "Neutru", fg: "#9c6500", bg: "#ffeb9c" },
  { t: "Calcul", fg: "#fa7d00", bg: "#f2f2f2", edge: "#7f7f7f", bold: true },
  { t: "Celulă legată", fg: "#fa7d00", linked: true },
  { t: "Ieşire", fg: "#3f3f3f", bg: "#f2f2f2", edge: "#3f3f3f", bold: true },
  { t: "Intrare", fg: "#3f3f76", bg: "#ffcc99", edge: "#7f7f7f" },
  { t: "Notă", fg: "#000", bg: "#ffffcc", edge: "#b2b2b2" },
  { t: "Text avertis...", fg: "#f00" },
];

const Label = ({ children, launch }: { children: string; launch?: boolean }) => (
  <GroupLabel>
    <span>{children}</span>
    {launch && <LaunchBtn aria-label={`Opţiuni ${children}`}><Launcher /></LaunchBtn>}
  </GroupLabel>
);

export default function App() {
  return (
    <Window>
      <Global />
      <Glass>
        <Backdrop>
          {ghosts.map((c, i) => <GhostTab key={i}><GhostIcon $c={c} /><GhostLine /><GhostClose /></GhostTab>)}
        </Backdrop>
        <TitleRow>
          <Quick>
            <Slot $w={18} aria-label="Excel"><ExcelMark /></Slot>
            <Slot $w={3} as="span"><QuickSep /></Slot>
            <Slot $w={30} aria-label="Salvare"><Save /></Slot>
            <Slot $w={14} aria-label="Anulare"><Undo c="#3a66c4" /></Slot>
            <Slot $w={15} aria-label="Listă anulare"><Caret c="#111" /></Slot>
            <Slot $w={20} aria-label="Refacere"><Undo c="#a3adba" flip /></Slot>
            <Slot $w={9} aria-label="Listă refacere"><Caret c="#8d97a4" /></Slot>
            <Slot $w={10} as="span"><QuickSep /></Slot>
            <Slot $w={8} aria-label="Particularizare"><svg width="7" height="6" viewBox="0 0 7 6"><path d="M0 0h7v1H0zM0 3h7L3.500 6z" fill="#111" /></svg></Slot>
          </Quick>
          <Title>{"TOT NECESAR   Send  -  Microsoft Excel"}</Title>
          <Caption>
            <CapBtn aria-label="Minimizare"><svg width="12" height="5" viewBox="0 0 12 5"><rect x=".5" y=".5" width="11" height="4" fill="#fff" stroke="#4c5f76" /></svg></CapBtn>
            <CapBtn aria-label="Restabilire"><svg width="12" height="12" viewBox="0 0 12 12" fill="#fff" stroke="#4c5f76"><path d="M3.500.500h8v8h-8z" /><path d="M.5 2.500h8v9h-8z" /><path d="M3.500 5.500h2v3h-2z" fill="#7b93b0" /></svg></CapBtn>
            <CapBtn $close aria-label="Închidere"><svg width="12" height="10" viewBox="0 0 12 10"><path d="M1 1h3l2 2 2-2h3L8 5l3 4H8L6 7 4 9H1l3-4z" fill="#fff" stroke="#5b3a3a" strokeWidth=".8" /></svg></CapBtn>
          </Caption>
        </TitleRow>
        <TabRow>
          <FileTab>Fişier</FileTab>
          <Tab $active>Pornire</Tab>
          {["Inserare", "Aspect pagină", "Formule", "Date", "Revizuire", "Vizualizare"].map((t) => <Tab key={t}>{t}</Tab>)}
          <DocControls>
            <Slot aria-label="Restrângere panglică"><svg width="9" height="7" viewBox="0 0 9 7"><path d="M.5 4.500L4.500.500l4 4v2l-4-3-4 3z" fill="#fff" stroke="#555b63" /></svg></Slot>
            <Slot aria-label="Ajutor"><svg width="16" height="16" viewBox="0 0 16 16"><circle cx="8" cy="8" r="7.500" fill="#3f72c4" stroke="#2b57a3" /><text x="8" y="12" textAnchor="middle" fontSize="11" fontWeight="700" fontFamily="Open Sans, sans-serif" fill="#fff">?</text></svg></Slot>
            <Slot aria-label="Minimizare registru"><svg width="11" height="4" viewBox="0 0 11 4"><rect x=".5" y=".5" width="10" height="3" rx="1" fill="#fff" stroke="#555b63" /></svg></Slot>
            <Slot aria-label="Restabilire registru"><svg width="12" height="11" viewBox="0 0 12 11" fill="#fff" stroke="#555b63"><path d="M4.500.500h7v6h-7z" /><path d="M.5 3.500h7v7h-7zM3 6.500h2v2H3z" /></svg></Slot>
            <Slot aria-label="Închidere registru"><svg width="11" height="10" viewBox="0 0 11 10"><path d="M.5.500h3l2 2.500 2-2.500h3L7.500 5l3 4.500h-3L5.500 7l-2 2.500h-3L3.500 5z" fill="#fff" stroke="#555b63" /></svg></Slot>
          </DocControls>
        </TabRow>
      </Glass>

      <Ribbon>
        <Group $w={188}>
          <GroupBody>
            <Big $w={49}><Clipboard /><span>Lipire</span><CaretBox><Caret /></CaretBox></Big>
            <Stack>
              <Small><Scissors />Decupare</Small>
              <Small><Copy />Copiere <Caret /></Small>
              <Small><Brush />Descriptor de formate</Small>
            </Stack>
          </GroupBody>
          <Label launch>Clipboard</Label>
        </Group>

        <Group $w={209}>
          <GroupBody $pad={5}>
            <Stack $rows>
              <Row>
                <Pick $w={112}><select aria-label="Font"><option>Calibri</option></select><Caret /></Pick>
                <Pick $w={43}><select aria-label="Dimensiune font"><option>11</option></select><Caret /></Pick>
                <Tool $w={24} aria-label="Mărire font"><Glyph $size={16}>A</Glyph><svg width="5" height="14"><path d="M0 3h5L2.500 0z" fill="#33549a" /></svg></Tool>
                <Tool $w={22} aria-label="Micşorare font"><Glyph $size={12}>A</Glyph><svg width="5" height="14"><path d="M0 0h5L2.500 3z" fill="#33549a" /></svg></Tool>
              </Row>
              <Row>
                <Tool aria-label="Aldin"><Glyph>B</Glyph></Tool>
                <Tool aria-label="Cursiv"><Glyph $italic>I</Glyph></Tool>
                <Tool aria-label="Subliniat"><Glyph $line>U</Glyph></Tool>
                <Tool $w={14} aria-label="Stil subliniere"><Caret /></Tool>
                <Sep />
                <Tool $w={24} aria-label="Borduri"><Dots /></Tool>
                <Tool $w={10} aria-label="Listă borduri"><Caret /></Tool>
                <Sep />
                <Tool $w={24} aria-label="Culoare umplere"><Bucket /></Tool>
                <Tool $w={10} aria-label="Listă umplere"><Caret /></Tool>
                <Tool $w={24} aria-label="Culoare font"><FontColor /></Tool>
                <Tool $w={8} aria-label="Listă culori"><Caret /></Tool>
              </Row>
            </Stack>
          </GroupBody>
          <Label launch>Font</Label>
        </Group>

        <Group $w={278}>
          <GroupBody $pad={5}>
            <Stack $rows>
              <Row>
                <Tool $w={23} $on aria-label="Aliniere sus"><VLines y={2} /></Tool>
                <Tool $w={23} aria-label="Aliniere la mijloc"><VLines y={6} /></Tool>
                <Tool $w={23} aria-label="Aliniere jos"><VLines y={9} /></Tool>
                <Sep />
                <Tool aria-label="Orientare"><Orient /></Tool>
                <Tool $w={8} aria-label="Listă orientare"><Caret /></Tool>
              </Row>
              <Row>
                <Tool $w={23} aria-label="Stânga"><Lines w={[[0, 14], [0, 9], [0, 14], [0, 9]]} /></Tool>
                <Tool $w={23} aria-label="Centru"><Lines w={[[0, 14], [2, 10], [0, 14], [2, 10]]} /></Tool>
                <Tool $w={23} aria-label="Dreapta"><Lines w={[[0, 14], [5, 9], [0, 14], [5, 9]]} /></Tool>
                <Sep />
                <Tool aria-label="Micşorare indent"><Indent out /></Tool>
                <Tool aria-label="Mărire indent"><Indent /></Tool>
              </Row>
            </Stack>
            <TallSep $h={54} />
            <Stack $rows>
              <Small><Wrap />Încadrare text</Small>
              <Small><Merge />Îmbinare şi centrare <Caret /></Small>
            </Stack>
          </GroupBody>
          <Label launch>Aliniere</Label>
        </Group>

        <Group $w={143}>
          <GroupBody $pad={5}>
            <Stack $rows>
              <Row><Pick $w={134}><select aria-label="Format număr"><option>General</option></select><Caret /></Pick></Row>
              <Row>
                <Tool aria-label="Monedă"><Glyph>$</Glyph></Tool>
                <Tool $w={12} aria-label="Listă monedă"><Caret /></Tool>
                <Tool>%</Tool>
                <Tool $w={24}>000</Tool>
                <Sep />
                <Tool aria-label="Mărire zecimală"><Decimal more /></Tool>
                <Tool aria-label="Micşorare zecimală"><Decimal /></Tool>
              </Row>
            </Stack>
          </GroupBody>
          <Label launch>Număr</Label>
        </Group>

        <Group>
          <GroupBody $pad={7}>
            <Big $w={74}><CondFmt /><span>Formatare</span><BigLine>condiţionată <Caret /></BigLine></Big>
            <Big $w={61}><TableFmt /><span>Formatare</span><BigLine>ca tabel <Caret /></BigLine></Big>
            <Gallery>
              <Swatches>
                {swatches.map((s) => (
                  <Swatch key={s.t} $fg={s.fg} $bg={s.bg} $edge={s.edge} $bold={s.bold} $sel={s.sel} $linked={s.linked}>{s.t}</Swatch>
                ))}
              </Swatches>
              <GalleryNav>
                <button aria-label="Sus"><Caret up c="#b3b7bc" /></button>
                <button aria-label="Jos"><Caret /></button>
                <button aria-label="Mai multe"><svg width="7" height="7" viewBox="0 0 7 7"><path d="M0 0h7v1H0zM1 3h5L3.500 6z" fill="#5f646c" /></svg></button>
              </GalleryNav>
            </Gallery>
          </GroupBody>
          <Label>Stiluri</Label>
        </Group>

        <Group $w={146}>
          <GroupBody $pad={4}>
            <Big $w={48}><InsertCells /><span>Inserare</span><CaretBox><Caret /></CaretBox></Big>
            <Big $w={46}><DeleteCells /><span>Ştergere</span><CaretBox><Caret /></CaretBox></Big>
            <Big $w={44}><FormatCells /><span>Format</span><CaretBox><Caret /></CaretBox></Big>
          </GroupBody>
          <Label>Celule</Label>
        </Group>

        <Group $w={254}>
          <GroupBody $pad={8}>
            <Stack>
              <Small><Sigma />Însumare automată <Caret /></Small>
              <Small><Fill />Umplere <Caret /></Small>
              <Small><Eraser />Golire <Caret /></Small>
            </Stack>
            <Big $w={58}><Sort /><span>Sortare şi</span><BigLine>filtrare <Caret /></BigLine></Big>
            <Big $w={56}><Binoculars /><span>Găsire şi</span><BigLine>selectare <Caret /></BigLine></Big>
          </GroupBody>
          <Label>Editare</Label>
        </Group>
        <svg width="6" height="1" />
      </Ribbon>

      <FormulaBar>
        <NameBox>
          <input aria-label="Casetă nume" defaultValue="F39" />
          <Slot $w={18} aria-label="Listă nume"><svg width="7" height="4"><path d="M0 0h7L3.500 4z" fill="#3f444b" /></svg></Slot>
        </NameBox>
        <FxArea><Knob /><Glyph $italic>fx</Glyph></FxArea>
        <FormulaInput><input aria-label="Bară de formule" defaultValue={formula} /></FormulaInput>
        <Expand aria-label="Extindere"><svg width="8" height="6" viewBox="0 0 8 6"><path d="M1 1l3 3 3-3" fill="none" stroke="#555b63" strokeWidth="2" /></svg></Expand>
      </FormulaBar>

      <Work>
        <Pane>
          <Sheet>
            <colgroup>
              <col style={{ width: 26 }} />
              {columns.map(([n, w]) => <col key={n} style={{ width: w }} />)}
            </colgroup>
            <thead>
              <tr>
                <Corner aria-label="Selectare totală" />
                {columns.map(([n]) => <ColHead key={n} scope="col" $on={n === "F"}>{n}</ColHead>)}
              </tr>
            </thead>
            <tbody>
              {rows.map((r) => (
                <tr key={r}>
                  <RowHead scope="row" $on={r === 39}>{r}</RowHead>
                  {columns.map(([n], i) => {
                    const e = cells[n + r];
                    const right = cells[(columns[i + 1]?.[0] ?? "") + r];
                    const below = cells[n + (r + 1)];
                    return (
                      <Cell key={n} $fill={e?.fill} $flag={e?.flag} $c={e?.c} $end={e?.end} $r={edge(e, right)} $b={edge(e, below?.fill ? below : undefined)}>
                        {e?.v}
                        {n === "F" && r === 39 && <Selection />}
                      </Cell>
                    );
                  })}
                </tr>
              ))}
            </tbody>
          </Sheet>
        </Pane>
        <VScroll>
          <Splitter />
          <ScrollBtn aria-label="Derulare sus"><Tri d="M0 7h9L4.500 2z" /></ScrollBtn>
          <VThumb><svg width="7" height="7" viewBox="0 0 7 7"><path d="M0 .5h7M0 2.500h7M0 4.500h7M0 6.500h7" stroke="#8f949b" /></svg></VThumb>
          <VTrack />
          <ScrollBtn aria-label="Derulare jos"><Tri d="M0 2h9L4.500 7z" /></ScrollBtn>
        </VScroll>
      </Work>

      <SheetBar>
        <SheetNav>
          <button aria-label="Prima foaie"><Tri s={8} d="M1 0h1.500v9H1zM8 0v9L3 4.500z" /></button>
          <button aria-label="Foaia anterioară"><Tri s={8} d="M7 0v9L2 4.500z" /></button>
          <button aria-label="Foaia următoare"><Tri s={8} d="M2 0v9l5-4.500z" /></button>
          <button aria-label="Ultima foaie"><Tri s={8} d="M7 0h1.500v9H7zM1 0v9l5-4.500z" /></button>
        </SheetNav>
        <SheetTab $active>Foaie1</SheetTab><Slash active />
        <SheetTab>Foaie2</SheetTab><Slash />
        <SheetTab>Foaie3</SheetTab><Slash />
        <SheetTab aria-label="Inserare foaie"><NewSheet /></SheetTab><Slash />
        <HScroll>
          <HSplit />
          <ScrollBtn aria-label="Derulare stânga"><Tri d="M7 0v9L2 4.500z" /></ScrollBtn>
          <HTrack><HThumb><svg width="7" height="7" viewBox="0 0 7 7"><path d="M.5 0v7M2.500 0v7M4.500 0v7M6.500 0v7" stroke="#8f949b" /></svg></HThumb></HTrack>
          <ScrollBtn aria-label="Derulare dreapta"><Tri d="M2 0v9l5-4.500z" /></ScrollBtn>
          <HSplit />
        </HScroll>
      </SheetBar>

      <Status>
        <Ready>Gata</Ready>
        <Views>
          <ViewBtn $w={19} $on aria-label="Normal"><svg width="13" height="10" viewBox="0 0 13 10"><path d="M.5.500h12v9H.5zM.5 3.500h12M.5 6.500h12M4.500.500v9M8.500.500v9" fill="#fff" stroke="#5b5f66" /></svg></ViewBtn>
          <ViewBtn $w={18} aria-label="Aspect pagină"><svg width="14" height="12" viewBox="0 0 14 12"><rect x=".5" y=".5" width="13" height="11" fill="#a5a9ae" stroke="#5b5f66" /><rect x="3.500" y="1.500" width="7" height="9" fill="#fff" stroke="#5b5f66" /><path d="M5 4h4M5 6h4M5 8h4" stroke="#888" /></svg></ViewBtn>
          <ViewBtn $w={20} aria-label="Sfârşit de pagină"><svg width="14" height="12" viewBox="0 0 14 12"><rect x=".5" y=".5" width="13" height="11" fill="#a5a9ae" stroke="#5b5f66" /><path d="M1 1h3v7H1zM5 1h4v7H5z" fill="#fff" stroke="#777" strokeWidth=".6" /></svg></ViewBtn>
        </Views>
        <ZoomLabel>100%</ZoomLabel>
        <Round aria-label="Micşorare"><svg width="8" height="2"><path d="M0 0h8v2H0z" fill="#4c5158" /></svg></Round>
        <Zoom type="range" aria-label="Zoom" defaultValue={50} />
        <Round aria-label="Mărire"><svg width="8" height="8"><path d="M0 3h8v2H0zM3 0h2v8H3z" fill="#4c5158" /></svg></Round>
        <svg width="4" height="1" />
      </Status>

      <Taskbar>
        <Glare width="120" height="39" viewBox="0 0 120 39"><path d="M24 0h20c22 11 40 24 54 39H76C66 24 50 10 24 0z" fill="#c3e1fb" opacity=".9" filter="url(#soft)" /><defs><filter id="soft"><feGaussianBlur stdDeviation="2" /></filter></defs></Glare>
        <Start aria-label="Start"><StartOrb /></Start>
        <Apps>
          <TaskBtn $state="stack" aria-label="Explorer"><Explorer /></TaskBtn>
          <TaskBtn aria-label="Media Player"><Player /></TaskBtn>
          <TaskBtn $state="open" aria-label="Chrome"><Chrome /></TaskBtn>
          <TaskBtn aria-label="Firefox"><Firefox /></TaskBtn>
          <TaskBtn $state="open" aria-label="QlikView"><Qlik /></TaskBtn>
          <TaskBtn $state="open" aria-label="Imagini"><Photo /></TaskBtn>
          <TaskBtn $state="open" aria-label="Outlook"><Outlook /></TaskBtn>
          <TaskBtn $state="open" aria-label="Notepad"><Notepad /></TaskBtn>
          <TaskBtn $state="open" aria-label="Notepad 2"><Notepad /></TaskBtn>
          <TaskBtn $state="active" aria-label="Excel"><ExcelApp /></TaskBtn>
        </Apps>
        <Tray>
          <Slot aria-label="Pictograme ascunse"><Tri s={8} d="M0 6.500h9L4.500 2z" c="#fff" /></Slot>
          <Slot $w={26} aria-label="Centru de acţiune"><svg width="16" height="16" viewBox="0 0 16 16"><path d="M1 0h2v16H1zM3 2c3-2 5 1 7 0v2c2 1 3 0 5 0l-2 5c-2 1-4 0-5-1-2-1-3 0-5 1z" fill="#fff" stroke="#12314f" strokeWidth=".5" /></svg></Slot>
          <Slot $w={24} aria-label="Reţea"><svg width="16" height="16" viewBox="0 0 16 16" fill="none" stroke="#fff"><path d="M5.500 3.500h9v8h-9M7 14.500h7M10.500 12v2" strokeWidth="1.500" /><path d="M1.500 0v4h3V0M3 4v8" strokeWidth="1.500" /></svg></Slot>
          <Slot $w={24} aria-label="Volum"><svg width="17" height="16" viewBox="0 0 17 16"><path d="M1 5h3l5-5v15l-5-4H1z" fill="#fff" /><circle cx="11.500" cy="10.500" r="4.500" fill="#e02b2b" stroke="#fff" /><path d="M9 8l5 5" stroke="#fff" strokeWidth="1.500" /></svg></Slot>
          <Clock>2:09 PM<br />9/10/2014</Clock>
          <ShowDesktop aria-label="Afişare desktop" />
        </Tray>
      </Taskbar>
    </Window>
  );
}
